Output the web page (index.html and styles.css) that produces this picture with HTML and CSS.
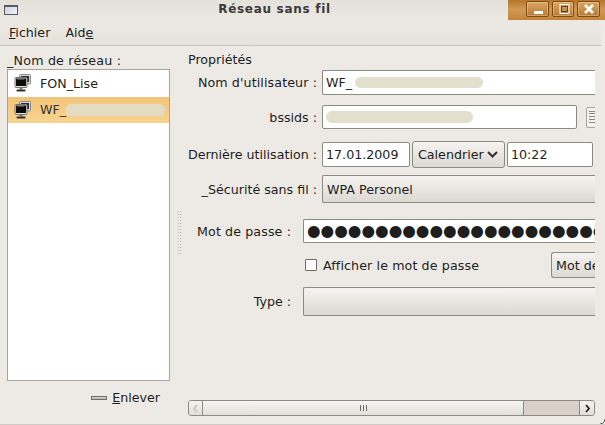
FILE: index.html
```html
<!DOCTYPE html>
<html lang="fr">
<head>
<meta charset="utf-8">
<title>Réseau sans fil</title>
<link rel="stylesheet" href="styles.css">
</head>
<body>
<svg class="defs" width="0" height="0" aria-hidden="true">
  <symbol id="net" viewBox="0 0 17 18">
    <rect x="5.5" y="0.5" width="11" height="9.5" rx="1" fill="#d8d8d4" stroke="#8a8a86"/>
    <rect x="7" y="2" width="8" height="6" fill="#2c2c2c"/>
    <rect x="1" y="3.5" width="12" height="10" rx="1" fill="#e4e4e0" stroke="#77776f"/>
    <rect x="2" y="4.5" width="10" height="7.5" fill="#0c0c0c"/>
    <rect x="3" y="5" width="7" height="1" fill="#4a4a4a"/>
    <rect x="5.5" y="14" width="3" height="1.5" fill="#777"/>
    <rect x="2.5" y="15.5" width="9" height="2" rx="0.7" fill="#333"/>
  </symbol>
</svg>
<div class="window">
  <header class="titlebar">
    <span class="winicon"></span>
    <h1 class="title">Réseau sans fil</h1>
    <div class="winbtns">
      <span class="winbtn"><svg viewBox="0 0 22 16" width="22" height="16"><rect x="7" y="10" width="9" height="3" fill="#fff"/></svg></span>
      <span class="winbtn"><svg viewBox="0 0 22 16" width="22" height="16"><rect x="7" y="3.5" width="9" height="9" fill="none" stroke="#fff" stroke-width="1"/><rect x="8.5" y="5.5" width="6" height="5" fill="none" stroke="#6e3f10" stroke-width="1"/></svg></span>
      <span class="winbtn"><svg viewBox="0 0 22 16" width="22" height="16"><path d="M7 4l8 8M15 4l-8 8" stroke="#fff" stroke-width="2.6" fill="none"/></svg></span>
    </div>
  </header>
  <nav class="menubar">
    <span><u>F</u>ichier</span>
    <span>Aid<u>e</u></span>
  </nav>
  <main class="content">
    <section class="left">
      <div class="listlabel">_Nom de réseau :</div>
      <ul class="netlist">
        <li class="netrow"><svg class="neticon"><use href="#net"/></svg>FON_Lise</li>
        <li class="netrow selected"><svg class="neticon"><use href="#net"/></svg>WF_<span class="blob blob-list"></span></li>
      </ul>
      <div class="removebar"><span class="minus"></span><span><u>E</u>nlever</span></div>
    </section>
    <div class="grip"></div>
    <section class="right">
      <div class="viewport">
        <div class="heading">Propriétés</div>
        <div class="row r-user">
          <label class="lbl wide">Nom d'utilisateur :</label>
          <div class="entry open">WF_<span class="blob blob-user"></span></div>
        </div>
        <div class="row r-bss">
          <label class="lbl">bssids :</label>
          <div class="entry short"><span class="blob blob-bss"></span></div>
          <span class="listbtn"><i></i><i></i><i></i><i></i><i></i></span>
        </div>
        <div class="row r-date">
          <label class="lbl">Dernière utilisation :</label>
          <div class="entry date">17.01.2009</div>
          <div class="btn cal">Calendrier<svg width="11" height="7" viewBox="0 0 11 7"><path d="M1 1l4.5 4.5L10 1" fill="none" stroke="#2e2e2e" stroke-width="2"/></svg></div>
          <div class="entry time">10:22</div>
        </div>
        <div class="row r-sec">
          <label class="lbl">_Sécurité sans fil :</label>
          <div class="combo wpa">WPA Personel</div>
        </div>
        <div class="row r-pass">
          <label class="lbl lbl-low wide">Mot de passe :</label>
          <div class="entry open pass">●●●●●●●●●●●●●●●●●●●●●●●●●</div>
        </div>
        <div class="row r-check">
          <span class="check"></span>
          <span class="checktext wide">Afficher le mot de passe</span>
          <div class="btn motbtn">Mot de passe</div>
        </div>
        <div class="row r-type">
          <label class="lbl lbl-low">Type :</label>
          <div class="combo type"></div>
        </div>
      </div>
      <div class="hscroll">
        <span class="arrow first"><svg width="7" height="9" viewBox="0 0 7 9"><path d="M5 1L2 4.5 5 8" fill="none" stroke="#c4c2bc" stroke-width="1.6"/></svg></span>
        <span class="thumb"><i></i><i></i><i></i></span>
        <span class="trough"></span>
        <span class="arrow last"><svg width="7" height="9" viewBox="0 0 7 9"><path d="M2 1l3 3.5L2 8" fill="none" stroke="#222" stroke-width="1.8"/></svg></span>
      </div>
    </section>
  </main>
  <svg class="resize" width="5" height="5" viewBox="0 0 5 5"><path d="M0.5 4.5H2.5L4.5 2.5V0.5" fill="none" stroke="#55524c" stroke-width="1"/></svg>
</div>
</body>
</html>
```

FILE: styles.css
```css
* { box-sizing: border-box; }
html, body { margin: 0; padding: 0; }
body {
  width: 605px;
  height: 425px;
  overflow: hidden;
  background: #edeae5;
  font-family: "DejaVu Sans", sans-serif;
  font-size: 12.67px;
  color: #1e1e1e;
}
.defs { display: block; height: 0; }
.window {
  position: relative;
  width: 605px;
  height: 425px;
  display: flex;
  flex-direction: column;
  border-bottom: 1px solid #cfcbc4;
}
.resize { position: absolute; right: 0; bottom: 0; }
.wide { letter-spacing: 0.1px; }

.titlebar {
  height: 21px;
  display: flex;
  background: linear-gradient(#e4e0da, #ece9e4);
}
.winicon {
  width: 14px;
  height: 10px;
  margin: 5px 0 0 4px;
  border: 1px solid #5a5a62;
  border-top-width: 2px;
  background: linear-gradient(135deg, #c8d4e6, #f4f4f6);
}
.title {
  flex: 1;
  margin: 0;
  padding-top: 2px;
  padding-left: 23px;
  text-align: center;
  font-size: 12px;
  line-height: 15px;
  font-weight: bold;
  letter-spacing: 0.7px;
  color: #3a3a3a;
}
.winbtns {
  width: 97px;
  height: 20px;
  display: flex;
  gap: 3px;
  padding: 1px 5px 0 18px;
  background: linear-gradient(#b8752c, #d29a55 50%, #c48438);
}
.winbtn {
  width: 23px;
  height: 16px;
  border: 1px solid #7a4a18;
  border-radius: 2px;
  background: linear-gradient(#d9a663, #b87a35);
  box-shadow: inset 0 0 0 1px rgba(255,235,200,.35);
  display: block;
  overflow: hidden;
}
.winbtn svg { display: block; margin: -1px 0 0 0; }

.menubar {
  height: 25px;
  display: flex;
  gap: 15px;
  padding: 4px 0 0 9px;
  line-height: 15px;
  background: linear-gradient(#ece9e4, #e6e3dd);
  border-bottom: 1px solid #c9c5bd;
  margin-right: 4px;
}
.content { flex: 1; display: flex; min-height: 0; }

.left { width: 170px; margin-left: 7px; flex: none; display: flex; flex-direction: column; }
.listlabel { height: 23px; padding-top: 7px; line-height: 15px; white-space: nowrap; letter-spacing: 0.2px; }
.netlist {
  list-style: none;
  margin: 0;
  padding: 0;
  width: 163px;
  height: 312px;
  background: #fff;
  border: 1px solid #a8a59c;
}
.netrow {
  height: 27px;
  display: flex;
  align-items: center;
  padding-left: 6px;
  padding-bottom: 1px;
  line-height: 15px;
}
.netrow.selected {
  height: 26px;
  background: linear-gradient(#f2c37a, #f8d490);
  color: #333;
}
.neticon { width: 17px; height: 18px; margin-right: 9px; flex: none; }
.blob { display: inline-block; background: #e2dfcc; border-radius: 7px; }
.blob-list { width: 100px; height: 12px; margin-left: -1px; background: #e4dcc2; }
.removebar {
  width: 153px;
  display: flex;
  justify-content: flex-end;
  align-items: center;
  gap: 5px;
  margin-top: 9px;
  line-height: 15px;
}
.minus {
  width: 16px;
  height: 4px;
  border: 1px solid #6f6f68;
  background: linear-gradient(#d8dad4, #b0b2aa);
}
.grip {
  width: 5px;
  height: 46px;
  margin-top: 164px;
  flex: none;
  background-image: radial-gradient(circle, #a8a49c 0.7px, transparent 0.8px);
  background-size: 2.5px 3px;
}
.right { width: 407px; margin-left: 6px; flex: none; display: flex; flex-direction: column; }
.viewport { height: 354px; overflow: hidden; }
.heading { height: 24px; padding-top: 6px; line-height: 15px; }

.row { display: flex; align-items: center; }
.r-user { height: 25px; margin-bottom: 10px; }
.r-bss { height: 24px; margin-bottom: 12px; }
.r-date { height: 27px; margin-bottom: 7px; gap: 2px; }
.r-sec { height: 28px; margin-bottom: 16px; }
.r-pass { height: 24px; margin-bottom: 9px; }
.r-check { height: 26px; margin-bottom: 9px; }
.r-type { height: 29px; }

.lbl { width: 129px; flex: none; margin-right: 5px; text-align: right; line-height: 15px; white-space: nowrap; }
.r-date .lbl { margin-right: 3px; }
.lbl-low { width: 103px; margin-right: 12px; }
.entry {
  height: 25px;
  background: #fff;
  border: 1px solid #8d8a82;
  border-radius: 2px;
  padding: 0 3px;
  line-height: 23px;
  white-space: nowrap;
  overflow: hidden;
  display: flex;
  align-items: center;
  flex: none;
}
.open { width: 273px; border-right: 0; border-radius: 2px 0 0 2px; }
.blob-user { width: 128px; height: 11px; margin-left: 3px; }
.blob-bss { width: 147px; height: 12px; }
.short { width: 255px; height: 24px; }
.listbtn {
  width: 16px;
  height: 21px;
  margin-left: 9px;
  flex: none;
  border: 1px solid #a8a59c;
  border-radius: 2px;
  background: #f4f2ee;
  display: flex;
  flex-direction: column;
  gap: 1px;
  padding: 3px 2px;
}
.listbtn i { display: block; height: 1px; width: 10px; background: #8a8880; margin-bottom: 1px; }
.date { width: 88px; }
.time { width: 86px; }
.btn {
  border: 1px solid #8d8a82;
  border-radius: 3px;
  background: linear-gradient(#f6f4f1, #dcd8d2);
  line-height: 15px;
  display: flex;
  align-items: center;
  white-space: nowrap;
  flex: none;
}
.cal { width: 93px; height: 27px; padding-left: 5px; gap: 3px; }
.combo {
  width: 273px;
  flex: none;
  border: 1px solid #8d8a82;
  border-right: 0;
  border-radius: 2px 0 0 2px;
  background: linear-gradient(#f6f4f1, #dcd8d2);
  display: flex;
  align-items: center;
  padding-left: 4px;
  line-height: 15px;
}
.wpa { height: 28px; }
.r-pass .entry, .r-type .combo { width: 292px; }
.pass { height: 24px; padding-left: 3px; font-size: 15.6px; line-height: 22px; letter-spacing: 0; }
.check { width: 12px; height: 12px; margin-left: 117px; border: 1px solid #6f6c65; border-radius: 1px; background: #fff; flex: none; }
.checktext { margin-left: 6px; line-height: 15px; white-space: nowrap; }
.motbtn { margin-left: auto; height: 26px; width: 44px; padding-left: 4px; overflow: hidden; border-right: 0; border-radius: 3px 0 0 3px; }
.type { height: 29px; }
.hscroll {
  display: flex;
  height: 16px;
  width: 407px;
  border: 1px solid #8d8a82;
  border-radius: 3px;
  overflow: hidden;
}
.arrow {
  width: 15px;
  flex: none;
  display: flex;
  align-items: center;
  justify-content: center;
  background: linear-gradient(#f6f4f1, #e2dfd9);
}
.first { border-right: 1px solid #8d8a82; width: 14px; }
.last { border-left: 1px solid #8d8a82; }
.thumb {
  width: 321px;
  flex: none;
  display: flex;
  align-items: center;
  justify-content: center;
  gap: 2px;
  background: linear-gradient(#f8f6f3, #e2dfd9);
  border-right: 1px solid #8d8a82;
}
.thumb i { display: block; width: 1px; height: 6px; background: #6e6c66; }
.trough { flex: 1; background: #d9d1c9; }
```
